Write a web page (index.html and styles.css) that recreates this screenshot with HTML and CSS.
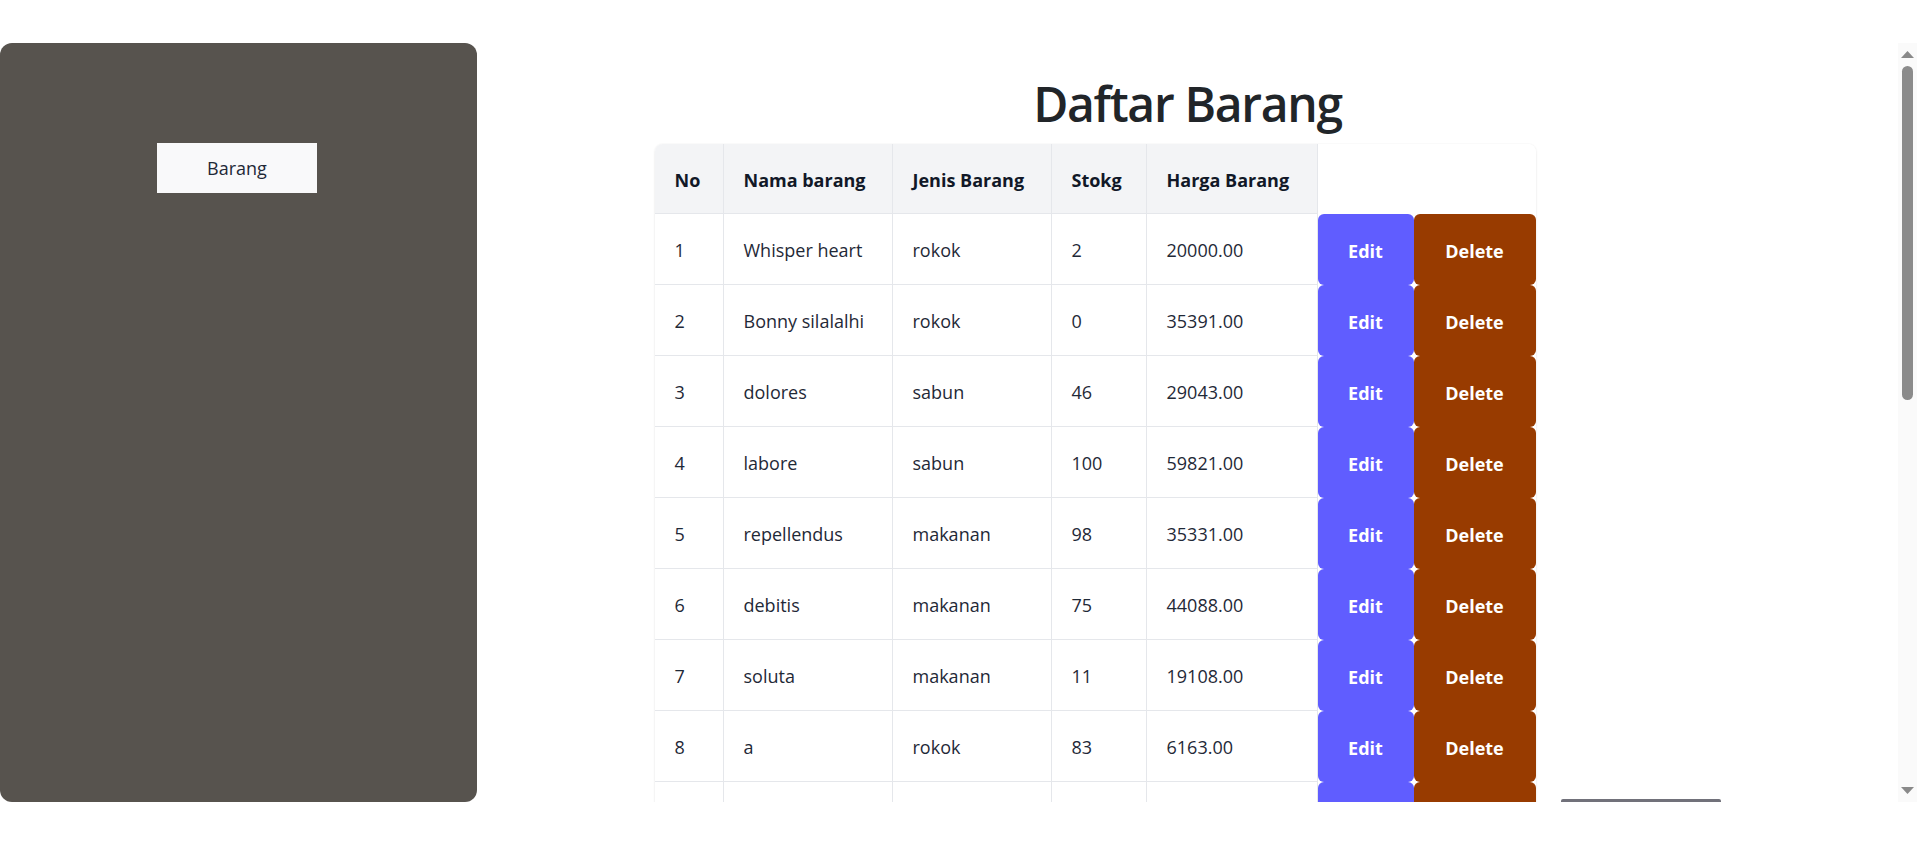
FILE: index.html
```html
<!DOCTYPE html>
<html lang="id">
<head>
<meta charset="utf-8">
<title>Daftar Barang</title>
<link rel="stylesheet" href="styles.css">
</head>
<body>
<div class="app">
  <aside class="sidebar">
    <a class="nav-btn" href="#">Barang</a>
  </aside>
  <main class="main">
    <h1 class="title">Daftar Barang</h1>
    <div class="content">
      <div class="table-card">
        <table class="items">
          <colgroup>
            <col class="c-no"><col class="c-nama"><col class="c-jenis"><col class="c-stok"><col class="c-harga"><col class="c-aksi">
          </colgroup>
          <thead>
            <tr><th>No</th><th>Nama barang</th><th>Jenis Barang</th><th>Stokg</th><th>Harga Barang</th><th class="th-aksi"></th></tr>
          </thead>
          <tbody>
            <tr><td>1</td><td>Whisper heart</td><td>rokok</td><td>2</td><td>20000.00</td><td class="aksi"><div class="actions"><button class="btn btn-edit">Edit</button><button class="btn btn-delete">Delete</button></div></td></tr>
            <tr><td>2</td><td>Bonny silalalhi</td><td>rokok</td><td>0</td><td>35391.00</td><td class="aksi"><div class="actions"><button class="btn btn-edit">Edit</button><button class="btn btn-delete">Delete</button></div></td></tr>
            <tr><td>3</td><td>dolores</td><td>sabun</td><td>46</td><td>29043.00</td><td class="aksi"><div class="actions"><button class="btn btn-edit">Edit</button><button class="btn btn-delete">Delete</button></div></td></tr>
            <tr><td>4</td><td>labore</td><td>sabun</td><td>100</td><td>59821.00</td><td class="aksi"><div class="actions"><button class="btn btn-edit">Edit</button><button class="btn btn-delete">Delete</button></div></td></tr>
            <tr><td>5</td><td>repellendus</td><td>makanan</td><td>98</td><td>35331.00</td><td class="aksi"><div class="actions"><button class="btn btn-edit">Edit</button><button class="btn btn-delete">Delete</button></div></td></tr>
            <tr><td>6</td><td>debitis</td><td>makanan</td><td>75</td><td>44088.00</td><td class="aksi"><div class="actions"><button class="btn btn-edit">Edit</button><button class="btn btn-delete">Delete</button></div></td></tr>
            <tr><td>7</td><td>soluta</td><td>makanan</td><td>11</td><td>19108.00</td><td class="aksi"><div class="actions"><button class="btn btn-edit">Edit</button><button class="btn btn-delete">Delete</button></div></td></tr>
            <tr><td>8</td><td>a</td><td>rokok</td><td>83</td><td>6163.00</td><td class="aksi"><div class="actions"><button class="btn btn-edit">Edit</button><button class="btn btn-delete">Delete</button></div></td></tr>
            <tr><td>9</td><td>voluptas</td><td>sabun</td><td>54</td><td>27410.00</td><td class="aksi"><div class="actions"><button class="btn btn-edit">Edit</button><button class="btn btn-delete">Delete</button></div></td></tr>
            <tr><td>10</td><td>quia</td><td>rokok</td><td>37</td><td>48215.00</td><td class="aksi"><div class="actions"><button class="btn btn-edit">Edit</button><button class="btn btn-delete">Delete</button></div></td></tr>
            <tr><td>11</td><td>est</td><td>makanan</td><td>12</td><td>15230.00</td><td class="aksi"><div class="actions"><button class="btn btn-edit">Edit</button><button class="btn btn-delete">Delete</button></div></td></tr>
            <tr><td>12</td><td>molestiae</td><td>sabun</td><td>66</td><td>52907.00</td><td class="aksi"><div class="actions"><button class="btn btn-edit">Edit</button><button class="btn btn-delete">Delete</button></div></td></tr>
            <tr><td>13</td><td>odit</td><td>rokok</td><td>29</td><td>31876.00</td><td class="aksi"><div class="actions"><button class="btn btn-edit">Edit</button><button class="btn btn-delete">Delete</button></div></td></tr>
            <tr><td>14</td><td>nihil</td><td>makanan</td><td>90</td><td>8450.00</td><td class="aksi"><div class="actions"><button class="btn btn-edit">Edit</button><button class="btn btn-delete">Delete</button></div></td></tr>
            <tr><td>15</td><td>aut</td><td>sabun</td><td>7</td><td>41102.00</td><td class="aksi"><div class="actions"><button class="btn btn-edit">Edit</button><button class="btn btn-delete">Delete</button></div></td></tr>
            <tr><td>16</td><td>eveniet</td><td>rokok</td><td>63</td><td>22318.00</td><td class="aksi"><div class="actions"><button class="btn btn-edit">Edit</button><button class="btn btn-delete">Delete</button></div></td></tr>
            <tr><td>17</td><td>magnam</td><td>makanan</td><td>45</td><td>57640.00</td><td class="aksi"><div class="actions"><button class="btn btn-edit">Edit</button><button class="btn btn-delete">Delete</button></div></td></tr>
            <tr><td>18</td><td>sint</td><td>sabun</td><td>18</td><td>12999.00</td><td class="aksi"><div class="actions"><button class="btn btn-edit">Edit</button><button class="btn btn-delete">Delete</button></div></td></tr>
            <tr><td>19</td><td>ipsam</td><td>rokok</td><td>71</td><td>39584.00</td><td class="aksi"><div class="actions"><button class="btn btn-edit">Edit</button><button class="btn btn-delete">Delete</button></div></td></tr>
            <tr><td>20</td><td>fugiat</td><td>makanan</td><td>24</td><td>26750.00</td><td class="aksi"><div class="actions"><button class="btn btn-edit">Edit</button><button class="btn btn-delete">Delete</button></div></td></tr>
          </tbody>
        </table>
      </div>
      <div class="side-panel"></div>
    </div>
  </main>
  <div class="scrollbar" aria-hidden="true">
    <div class="sb-btn sb-up">
      <svg width="13" height="7" viewBox="0 0 13 7"><path d="M6.5 0L13 7H0z" fill="#898989"/></svg>
    </div>
    <div class="sb-track">
      <div class="sb-thumb"></div>
    </div>
    <div class="sb-btn sb-down">
      <svg width="13" height="7" viewBox="0 0 13 7"><path d="M0 0H13L6.5 7z" fill="#898989"/></svg>
    </div>
  </div>
</div>
</body>
</html>
```
FILE: styles.css
```css
* { box-sizing: border-box; }

html, body {
  margin: 0;
  background: #ffffff;
  font-family: "Open Sans", "Noto Sans", sans-serif;
  color: #1f2937;
}

.app {
  display: flex;
  margin-top: 43px;
  height: 759px;
}

.sidebar {
  flex: 0 0 477px;
  height: 100%;
  background: #57534e;
  border-radius: 12px;
  display: flex;
  flex-direction: column;
  align-items: center;
  padding-top: 100px;
  padding-right: 3px;
}

.nav-btn {
  display: block;
  width: 160px;
  height: 50px;
  line-height: 50px;
  text-align: center;
  background: #f9f9fa;
  color: #1f2937;
  font-size: 18px;
  text-decoration: none;
}

.main {
  flex: 1;
  min-width: 0;
  height: 100%;
  overflow-y: hidden;
  padding: 32px 0 9px 0;
}

/* scrollbar drawn as a column of the layout */
.scrollbar {
  flex: 0 0 19px;
  height: 100%;
  background: #fafafa;
  display: flex;
  flex-direction: column;
}

.sb-btn {
  height: 19px;
  display: flex;
  justify-content: center;
}

.sb-btn svg { display: block; }

.sb-up { padding-top: 8px; }
.sb-down { padding-top: 4px; }

.sb-track {
  flex: 1;
  display: flex;
  justify-content: center;
  padding-top: 4px;
}

.sb-thumb {
  width: 11px;
  height: 334px;
  border-radius: 6px;
  background: #8b8b8b;
}

.title {
  margin: 0 0 11px;
  text-align: center;
  font-size: 48px;
  line-height: 58px;
  font-weight: 600;
  letter-spacing: -1.3px;
  color: #212529;
}

.content {
  display: flex;
  justify-content: center;
  align-items: center;
  gap: 25px;
}

.table-card {
  flex: 0 0 881px;
  border-radius: 8px;
  overflow: hidden;
  background: #fff;
  box-shadow: 0 1px 3px rgba(0, 0, 0, 0.08), 0 0 2px rgba(0, 0, 0, 0.05);
}

.items {
  width: 881px;
  table-layout: fixed;
  border-collapse: separate;
  border-spacing: 0;
  font-size: 18px;
}

.c-no { width: 69px; }
.c-nama { width: 169px; }
.c-jenis { width: 159px; }
.c-stok { width: 95px; }
.c-harga { width: 171px; }
.c-aksi { width: 218px; }

.items thead tr { height: 70px; }

.items th {
  background: #f3f4f6;
  color: #111827;
  font-weight: 700;
  text-align: left;
  padding: 2px 0 0 20px;
  border-right: 1px solid #e5e7eb;
  border-bottom: 1px solid #e5e7eb;
  white-space: nowrap;
}

.items th.th-aksi {
  background: #ffffff;
  border: 0;
}

.items td {
  padding: 2px 0 0 20px;
  border-right: 1px solid #e5e7eb;
  border-bottom: 1px solid #e5e7eb;
  color: #1f2937;
  vertical-align: middle;
  white-space: nowrap;
}

.items td.aksi {
  padding: 0;
  border: 0;
}

.actions {
  display: flex;
  height: 71px;
}

.btn {
  border: 0;
  margin: 0;
  padding: 2px 0 0;
  height: 71px;
  border-radius: 6px;
  color: #ffffff;
  font-family: "Open Sans", "Noto Sans", sans-serif;
  font-size: 18px;
  font-weight: 700;
  cursor: pointer;
}

.btn-edit {
  width: 96px;
  background: #605dff;
}

.btn-delete {
  flex: 1;
  background: #983b00;
}

.side-panel {
  flex: 0 0 160px;
  height: 180px;
  background: #71717a;
  border-radius: 2px;
}
```
